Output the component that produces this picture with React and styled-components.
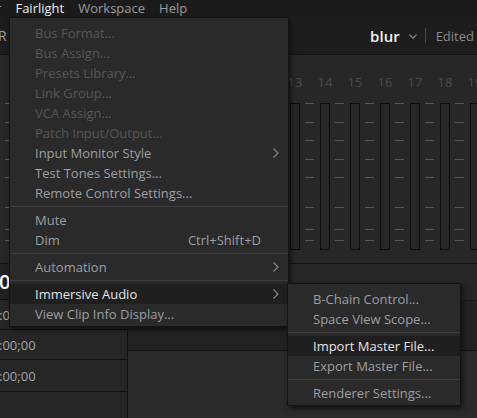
import React from 'react';
import styled, { createGlobalStyle } from 'styled-components';

const GlobalStyle = createGlobalStyle`
	html, body {
		margin: 0;
		padding: 0;
		background: #262626;
		overflow: hidden;
	}
	body {
		font-family: "Open Sans", "Noto Sans", sans-serif;
		font-size: 13px;
	}
`;

const mainMenu = [
	{ label: 'Bus Format...', disabled: true },
	{ label: 'Bus Assign...', disabled: true },
	{ label: 'Presets Library...', disabled: true },
	{ label: 'Link Group...', disabled: true },
	{ label: 'VCA Assign...', disabled: true },
	{ label: 'Patch Input/Output...', disabled: true },
	{ label: 'Input Monitor Style', sub: true },
	{ label: 'Test Tones Settings...' },
	{ label: 'Remote Control Settings...' },
	{ sep: true },
	{ label: 'Mute' },
	{ label: 'Dim', shortcut: 'Ctrl+Shift+D' },
	{ sep: true },
	{ label: 'Automation', sub: true },
	{ sep: true },
	{ label: 'Immersive Audio', sub: true, active: true },
	{ label: 'View Clip Info Display...' },
];

const subMenu = [
	{ label: 'B-Chain Control...' },
	{ label: 'Space View Scope...' },
	{ sep: true },
	{ label: 'Import Master File...', active: true },
	{ label: 'Export Master File...' },
	{ sep: true },
	{ label: 'Renderer Settings...' },
];

const channels = Array.from({ length: 19 }, (_, i) => i + 1);
const tickOffsets = [0, 19, 37, 56, 74, 104, 126, 137];

const ChevronRight = () => (
	<svg width="6" height="10" viewBox="0 0 6 10">
		<polyline points="0.5,0.5 5,5 0.5,9.5" fill="none" stroke="#8c8c8c" strokeWidth="1.1" />
	</svg>
);

const ChevronDown = () => (
	<svg width="8" height="5" viewBox="0 0 8 5">
		<polyline points="0.5,0.6 4,4.2 7.5,0.6" fill="none" stroke="#8a8a8a" strokeWidth="1.2" />
	</svg>
);

const Menu = ({ items, showTrail }) => (
	<>
		{items.map((item, index) =>
			item.sep ? (
				<Separator key={index} />
			) : (
				<MenuItem key={index} $active={item.active} $disabled={item.disabled}>
					<ItemLabel>{item.label}</ItemLabel>
					{item.shortcut && <Shortcut>{item.shortcut}</Shortcut>}
					{showTrail && <Trail>{item.sub && <ChevronRight />}</Trail>}
				</MenuItem>
			)
		)}
	</>
);

const App = () => {
	return (
		<Page>
			<GlobalStyle />
			<MenuBar>
				<BarItem>Color</BarItem>
				<BarItem $open>Fairlight</BarItem>
				<BarItem>Workspace</BarItem>
				<BarItem>Help</BarItem>
			</MenuBar>

			<Toolbar>
				<PageTitle>R</PageTitle>
				<ProjectGroup>
					<ProjectName>blur</ProjectName>
					<ChevronDown />
					<Divider />
					<Status>Edited</Status>
				</ProjectGroup>
			</Toolbar>

			<Mixer>
				<ChannelRow>
					{channels.map((n) => (
						<Channel key={n}>
							<ChannelNumber>
								<span>{n}</span>
							</ChannelNumber>
							<StripRow>
								<Fader />
								<svg width="9" height="147" viewBox="0 0 9 147">
									{tickOffsets.map((y) => (
										<rect key={y} x="0" y={y} width="9" height="1" fill="#54565b" />
									))}
								</svg>
							</StripRow>
						</Channel>
					))}
				</ChannelRow>
			</Mixer>

			<Lower>
				<TimecodeColumn>
					<TimecodeRow $height={35} $big>0</TimecodeRow>
					<TimecodeRow $height={29}>:0</TimecodeRow>
					<TimecodeRow $height={29}>:00;00</TimecodeRow>
					<TimecodeRow $height={31}>:00;00</TimecodeRow>
				</TimecodeColumn>
				<Workspace>
					<Band $height={36} $bg="#262626" $line="#1a1a1a" />
					<Band $height={49} $bg="#222222" $line="#111111" />
					<Fill />
				</Workspace>
			</Lower>

			<Dropdown $top={17} $left={9} $width={280}>
				<Menu items={mainMenu} showTrail />
			</Dropdown>

			<Dropdown $top={283} $left={287} $width={174}>
				<Menu items={subMenu} />
			</Dropdown>
		</Page>
	);
};

const Page = styled.div`
	position: relative;
	width: 477px;
	height: 418px;
	overflow: hidden;
	display: flex;
	flex-direction: column;
	background: #262626;
`;

const MenuBar = styled.div`
	height: 17px;
	flex-shrink: 0;
	display: flex;
	align-items: center;
	margin-left: -38px;
	background: #1b1b1b;
`;

const BarItem = styled.div`
	padding: 0 7px;
	line-height: 17px;
	font-size: 13px;
	white-space: nowrap;
	color: ${(p) => (p.$open ? '#ececec' : '#9a9a9a')};
`;

const Toolbar = styled.div`
	height: 37px;
	flex-shrink: 0;
	display: flex;
	align-items: center;
	justify-content: space-between;
	background: #1d1d1d;
	border-bottom: 1px solid #121212;
`;

const PageTitle = styled.span`
	margin-left: -2px;
	font-size: 14px;
	color: #9a9a9a;
`;

const ProjectGroup = styled.div`
	display: flex;
	align-items: center;
	margin-right: 3px;
	svg {
		margin-left: 9px;
		margin-top: 2px;
	}
`;

const ProjectName = styled.span`
	font-size: 15px;
	font-weight: 600;
	color: #f2f2f2;
`;

const Divider = styled.div`
	width: 1px;
	height: 15px;
	margin: 0 10px 0 8px;
	background: #454545;
`;

const Status = styled.span`
	font-size: 13px;
	color: #8a8a8a;
	white-space: nowrap;
`;

const Mixer = styled.div`
	height: 208px;
	flex-shrink: 0;
	overflow: hidden;
	background: #272727;
	border-bottom: 1px solid #141414;
`;

const ChannelRow = styled.div`
	display: flex;
	margin-left: -70px;
	padding-top: 19px;
`;

const Channel = styled.div`
	width: 30px;
	flex-shrink: 0;
	display: flex;
	flex-direction: column;
`;

const ChannelNumber = styled.div`
	width: 10px;
	height: 16px;
	display: flex;
	justify-content: center;
	margin-bottom: 13px;
	span {
		font-size: 13px;
		line-height: 16px;
		color: #4a4a4a;
		white-space: nowrap;
	}
`;

const StripRow = styled.div`
	display: flex;
	gap: 5px;
`;

const Fader = styled.div`
	width: 10px;
	height: 147px;
	box-sizing: border-box;
	border: 1px solid #0c0c0c;
	background: #272727;
`;

const Lower = styled.div`
	flex: 1;
	display: flex;
`;

const TimecodeColumn = styled.div`
	width: 127px;
	flex-shrink: 0;
	border-right: 1px solid #111;
	display: flex;
	flex-direction: column;
`;

const TimecodeRow = styled.div`
	height: ${(p) => p.$height}px;
	flex-shrink: 0;
	display: flex;
	align-items: center;
	margin-left: -1px;
	border-bottom: 1px solid #121212;
	background: ${(p) => (p.$big ? '#222222' : '#262626')};
	color: ${(p) => (p.$big ? '#ffffff' : '#a4a4a4')};
	font-size: ${(p) => (p.$big ? '20px' : '13px')};
	font-weight: ${(p) => (p.$big ? 600 : 400)};
`;

const Workspace = styled.div`
	flex: 1;
	display: flex;
	flex-direction: column;
`;

const Band = styled.div`
	height: ${(p) => p.$height}px;
	flex-shrink: 0;
	background: ${(p) => p.$bg};
	border-bottom: 1px solid ${(p) => p.$line};
`;

const Fill = styled.div`
	flex: 1;
	background: #2b2b2b;
`;

const Dropdown = styled.div`
	position: absolute;
	top: ${(p) => p.$top}px;
	left: ${(p) => p.$left}px;
	width: ${(p) => p.$width}px;
	box-sizing: border-box;
	padding: 5px 0 2px;
	background: #2a2a2a;
	border: 1px solid #141414;
	box-shadow: 2px 3px 5px rgba(0, 0, 0, 0.55);
`;

const MenuItem = styled.div`
	height: 20px;
	display: flex;
	align-items: center;
	padding-left: 25px;
	white-space: nowrap;
	background: ${(p) => (p.$active ? '#1f1f1f' : 'transparent')};
	color: ${(p) => (p.$active ? '#e4e4e4' : p.$disabled ? '#565656' : '#9d9fa2')};
`;

const ItemLabel = styled.span`
	flex: 1;
`;

const Shortcut = styled.span`
	color: #9d9fa2;
`;

const Trail = styled.span`
	width: 27px;
	box-sizing: border-box;
	padding-right: 9px;
	display: flex;
	justify-content: flex-end;
`;

const Separator = styled.div`
	height: 1px;
	margin: 3px 0;
	background: #3c3c3c;
`;

export default App;
